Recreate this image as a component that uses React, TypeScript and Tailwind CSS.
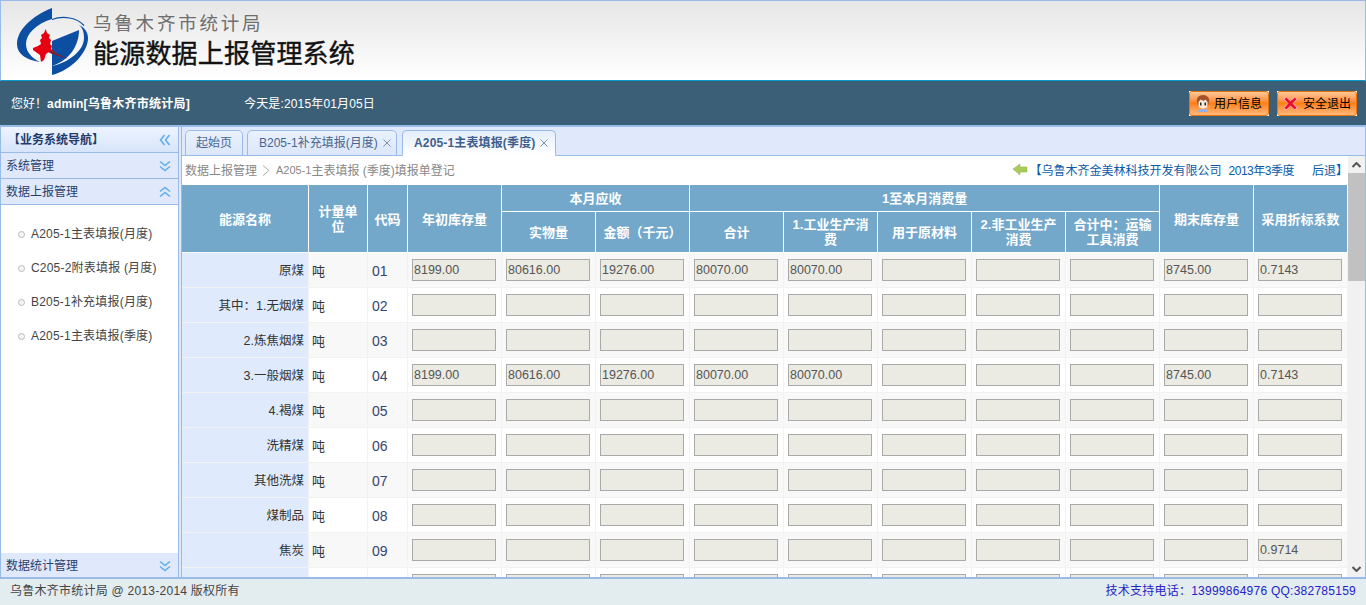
import React from "react";

const font = { fontFamily: '"Liberation Sans","Noto Sans CJK SC",sans-serif' };

function Chevrons({ dir, className = "" }: { dir: "up" | "down" | "left"; className?: string }) {
  const rot = dir === "up" ? "rotate(180 7 7)" : dir === "left" ? "rotate(90 7 7)" : "";
  return (
    <svg width="14" height="14" viewBox="0 0 14 14" className={className}>
      <g transform={rot} fill="none" stroke="#63aeea" strokeWidth="1.6">
        <path d="M2 2.5l5 4 5-4" />
        <path d="M2 7.5l5 4 5-4" />
      </g>
    </svg>
  );
}

function Logo() {
  return (
    <svg width="76" height="72" viewBox="14 6 76 72" className="shrink-0">
      <path d="M52 8v11C36 24 26 34 26 44c0 8 6 14 14 18C26 60 17 54 17 44 17 30 32 16 52 8z" fill="#0b4ea2" />
      <path d="M52 19.5c11-4 25-2 32 6" fill="none" stroke="#0b4ea2" strokeWidth="1.2" />
      <path d="M52 41l27-11c0 15-9 30-27 36z" fill="#0b4ea2" />
      <path d="M52 75c20-5 36-23 36-37 0-6-4-11-9-13 4 3 5 8 5 13 0 12-14 24-32 28z" fill="#0b4ea2" />
      <path d="M48 49l20 10-16-5-4-2z" fill="#7a2030" />
      <path d="M45.700 29l1.300 4 3 2-1 3 2 2-1 4 2 2-1 3 4 3-5-1-4 3-2 6-3 2-1-7-7-5v-2l5-2 3-2-1-4 2-2-1-3 3-2z" fill="#e60012" />
    </svg>
  );
}

function Face() {
  return (
    <svg width="16" height="18" viewBox="0 0 16 18" className="shrink-0">
      <path d="M2 8c-1-4 2-7 6-7s7 3 6 7l-1 4H3z" fill="#a5522c" />
      <path d="M3.500 8l2-2.500 3 1.500 2-1.500 2 2.500v4c0 1.500-2 2.500-4.500 2.500s-4.500-1-4.500-2.500z" fill="#fdebdc" />
      <path d="M3 18c0-2 2-3 5-3s5 1 5 3z" fill="#8fb0ea" />
      <rect x="5" y="8.500" width="1.500" height="3" fill="#222" />
      <rect x="9.500" y="8.500" width="1.500" height="3" fill="#222" />
    </svg>
  );
}

function RedX() {
  return (
    <svg width="15" height="15" viewBox="0 0 14 14" className="shrink-0">
      <path d="M1 3l2-2 4 3.500L11 1l2 2-3.500 4L13 11l-2 2-4-3.500L3 13l-2-2 3.500-4z" fill="#e8102a" stroke="#fde" strokeWidth=".7" />
    </svg>
  );
}

function HeadButton({ icon, label, gap }: { icon: React.ReactNode; label: string; gap: string }) {
  return (
    <div className="bg-white">
      <div className={"flex h-[25px] w-[80px] items-center rounded-[3px] border border-[#e8720c] bg-gradient-to-b from-[#ffc896] via-[#ff8010] to-[#ffb877] pl-[5px] text-[12px] text-black " + gap}>
        {icon}
        <span className="pt-px">{label}</span>
      </div>
    </div>
  );
}

const widths = [127, 59, 40, 94, 94, 94, 94, 94, 94, 94, 94, 94, 94];

const A = ["8199.00", "80616.00", "19276.00", "80070.00", "80070.00", "", "", "", "8745.00", "0.7143"];
const E = ["", "", "", "", "", "", "", "", "", ""];
const J = ["", "", "", "", "", "", "", "", "", "0.9714"];

const rows: { name: string; unit: string; code: string; vals: string[] }[] = [
  { name: "原煤", unit: "吨", code: "01", vals: A },
  { name: "其中：1.无烟煤", unit: "吨", code: "02", vals: E },
  { name: "2.炼焦烟煤", unit: "吨", code: "03", vals: E },
  { name: "3.一般烟煤", unit: "吨", code: "04", vals: A },
  { name: "4.褐煤", unit: "吨", code: "05", vals: E },
  { name: "洗精煤", unit: "吨", code: "06", vals: E },
  { name: "其他洗煤", unit: "吨", code: "07", vals: E },
  { name: "煤制品", unit: "吨", code: "08", vals: E },
  { name: "焦炭", unit: "吨", code: "09", vals: J },
  { name: "", unit: "", code: "", vals: E },
];

const th = "border-r border-b border-white bg-[#73a8cb] p-0 text-center align-middle text-[13px] leading-[15px] font-bold text-white";
const thTall = th + " pt-[2px]";

function EnergyTable() {
  return (
    <table className="table-fixed border-separate border-spacing-0" style={{ width: 1166 }}>
      <colgroup>
        {widths.map((w, i) => (
          <col key={i} style={{ width: w }} />
        ))}
      </colgroup>
      <thead>
        <tr className="h-[27px]">
          <th rowSpan={2} className={thTall}>能源名称</th>
          <th rowSpan={2} className={th + " px-2"}>计量单位</th>
          <th rowSpan={2} className={thTall}>代码</th>
          <th rowSpan={2} className={thTall}>年初库存量</th>
          <th colSpan={2} className={th}>本月应收</th>
          <th colSpan={5} className={th}>1至本月消费量</th>
          <th rowSpan={2} className={thTall}>期末库存量</th>
          <th rowSpan={2} className={thTall}>采用折标系数</th>
        </tr>
        <tr className="h-[41px]">
          <th className={th}>实物量</th>
          <th className={th}>金额（千元）</th>
          <th className={th}>合计</th>
          <th className={th + " px-2"}>1.工业生产消费</th>
          <th className={th}>用于原材料</th>
          <th className={th + " px-2"}>2.非工业生产消费</th>
          <th className={th + " px-1"}>合计中：运输工具消费</th>
        </tr>
      </thead>
      <tbody>
        {rows.map((r, i) => {
          const bg = i % 2 === 0 ? "bg-[#f8f8f8]" : "bg-white";
          const td = "h-[35px] border-r border-b border-[#f2f2f2] p-0 " + bg;
          return (
            <tr key={i}>
              <td className="h-[35px] border-r border-b border-[#f2f2f2] bg-[#dfebfd] p-0 pt-[3px] pr-[4px] text-right text-[12.5px] text-[#333]">{r.name}</td>
              <td className={td + " pt-[3px] pl-[3px] text-[13px] text-[#333]"}>{r.unit}</td>
              <td className={td + " pt-[3px] pl-[4px] text-[14px] text-[#35456e]"}>{r.code}</td>
              {r.vals.map((v, j) => (
                <td key={j} className={td + " pl-[4px] text-left"}>
                  <input
                    readOnly
                    value={v}
                    className="box-border block h-[22px] w-[84px] border border-[#a9a9a9] bg-[#ebeae3] px-[1px] text-[12.5px] text-[#555] outline-none"
                  />
                </td>
              ))}
            </tr>
          );
        })}
      </tbody>
    </table>
  );
}

function Tab({ label, active, close, w }: { label: string; active?: boolean; close?: boolean; w: string }) {
  return (
    <div
      className={
        "mb-[-1px] flex h-[26px] items-center gap-[5px] rounded-t-[5px] border border-[#99bbe8] text-[12px] " +
        (close ? "pl-[11px] " : "justify-center ") +
        w +
        (active
          ? " border-b-white bg-gradient-to-b from-[#e4eefc] to-white font-bold tracking-[0.15px] text-[#415f8c]"
          : " bg-gradient-to-b from-[#e9f1fd] to-[#dbe7fa] text-[#4a6590]")
      }
    >
      <span>{label}</span>
      {close && (
        <svg width="8" height="8" viewBox="0 0 8 8" className="shrink-0">
          <path d="M.5.500l7 7M7.500.500l-7 7" fill="none" stroke="#7a90ac" strokeWidth="1" />
        </svg>
      )}
    </div>
  );
}

function NavItem({ label }: { label: string }) {
  return (
    <div className="flex h-[34px] items-center pl-[17px] text-[12px] tracking-[0.2px] text-[#444]">
      <span className="mr-[6px] h-[7px] w-[7px] rounded-full border border-[#bbb] bg-[#f4f4f4]" />
      {label}
    </div>
  );
}

function NavHead({ label, dir }: { label: string; dir: "up" | "down" }) {
  return (
    <div className="flex h-[26px] items-center justify-between border-b border-[#99bbe8] bg-[#dfe9fb] pr-[6px] pl-[5px] text-[12px] text-[#2a3f6e]">
      <span>{label}</span>
      <Chevrons dir={dir} />
    </div>
  );
}

export default function App() {
  return (
    <div className="flex h-[605px] w-[1366px] flex-col overflow-hidden bg-white" style={font}>
      <header className="flex h-[81px] shrink-0 items-start border-x border-t border-[#99bbe8] border-b border-b-[#0a9ac9] bg-gradient-to-b from-[#e6e6e6] to-white pt-[5px] pl-[13px]">
        <Logo />
        <div className="pl-[3px]">
          <div className="pt-[5px] text-[18.5px] leading-[26px] tracking-[2.8px] text-[#6f6f6f]">乌鲁木齐市统计局</div>
          <div className="text-[26px] leading-[34px] tracking-[0.2px] text-[#111] [-webkit-text-stroke:0.4px_#111]">能源数据上报管理系统</div>
        </div>
      </header>

      <div className="flex h-[44px] shrink-0 items-center justify-between bg-[#3c5f78] pr-[9px] pl-[11px] text-[12px] text-white">
        <div className="flex pt-px">
          <span className="w-[233px]">
            您好！<b className="tracking-[0.25px]">admin[乌鲁木齐市统计局]</b>
          </span>
          <span className="tracking-[0.15px]">今天是:2015年01月05日</span>
        </div>
        <div className="flex gap-[8px]">
          <HeadButton icon={<Face />} label="用户信息" gap="gap-[3px]" />
          <HeadButton icon={<RedX />} label="安全退出" gap="gap-[5px]" />
        </div>
      </div>

      <div className="flex min-h-0 flex-1 gap-[2px] border-x border-y-2 border-[#99bbe8] bg-[#dfe9fb]">
        <aside className="flex w-[178px] shrink-0 flex-col border-r border-[#99bbe8] bg-white">
          <div className="flex h-[26px] items-center justify-between border-b border-[#99bbe8] bg-gradient-to-b from-[#eef4fe] to-[#d6e4fa] pr-[6px] pl-[7px] text-[12px] font-bold text-[#1f3a6a]">
            <span>【业务系统导航】</span>
            <Chevrons dir="left" />
          </div>
          <NavHead label="系统管理" dir="down" />
          <NavHead label="数据上报管理" dir="up" />
          <div className="flex-1 pt-[12px]">
            <NavItem label="A205-1主表填报(月度)" />
            <NavItem label="C205-2附表填报 (月度)" />
            <NavItem label="B205-1补充填报(月度)" />
            <NavItem label="A205-1主表填报(季度)" />
          </div>
          <div className="flex h-[24px] items-center justify-between bg-[#dfe9fb] pt-px pr-[6px] pl-[5px] text-[12px] text-[#2a3f6e]">
            <span>数据统计管理</span>
            <Chevrons dir="down" />
          </div>
        </aside>

        <main className="flex min-w-0 flex-1 flex-col border-l border-[#99bbe8] bg-white">
          <div className="flex h-[29px] shrink-0 items-end gap-[4px] border-b border-[#99bbe8] bg-[#dfe9fb] pl-[3px]">
            <Tab label="起始页" w="w-[58px]" />
            <Tab label="B205-1补充填报(月度)" w="w-[150px]" close />
            <div className="-ml-[3px] w-0" />
            <Tab label="A205-1主表填报(季度)" w="w-[154px]" active close />
          </div>
          <div className="flex min-h-0 flex-1">
            <div className="min-w-0 flex-1 overflow-hidden">
              <div className="flex h-[29px] items-center justify-between pl-[3px] text-[12px]">
                <div className="flex items-center text-[#888]">
                  <span>数据上报管理</span>
                  <svg width="8" height="11" viewBox="0 0 8 11" className="mr-[6px] ml-[5px]">
                    <path d="M1 .500l6 5-6 5" fill="none" stroke="#aaa" strokeWidth="1" />
                  </svg>
                  <span className="text-[11px]">A205-1</span>
                  <span>主表填报 (季度)填报单登记</span>
                </div>
                <div className="flex items-center text-[#0a5aa8]">
                  <svg width="16" height="14" viewBox="0 0 16 14" className="mr-[3px] -translate-y-px">
                    <path d="M1 6l7-5v3h7v5H8v3z" fill="#a8cc5a" stroke="#8ab040" strokeWidth=".5" />
                  </svg>
                  <span className="-ml-[1px]">【乌鲁木齐金美林科技开发有限公司</span>
                  <span className="ml-[7px] tracking-[-0.5px]">2013年3季度</span>
                  <span className="ml-[18px]">后退</span>
                  <span>】</span>
                </div>
              </div>
              <EnergyTable />
            </div>
            <div className="flex w-[17px] shrink-0 flex-col items-center bg-[#f1f1f1]">
              <div className="flex h-[17px] items-center justify-center">
                <svg width="9" height="6" viewBox="0 0 9 6"><path d="M0.500 5L4.500 1l4 4" fill="none" stroke="#555" strokeWidth="2" /></svg>
              </div>
              <div className="h-[108px] w-full bg-[#c1c1c1]" />
              <div className="flex-1" />
              <div className="flex h-[17px] items-center justify-center">
                <svg width="9" height="6" viewBox="0 0 9 6"><path d="M0.500 1L4.500 5l4-4" fill="none" stroke="#555" strokeWidth="2" /></svg>
              </div>
            </div>
          </div>
        </main>
      </div>

      <footer className="flex h-[26px] shrink-0 items-center justify-between bg-[#e3ecef] pr-[10px] pb-[2px] pl-[10px] text-[12px] tracking-[0.25px] text-[#444]">
        <span>乌鲁木齐市统计局 @ 2013-2014 版权所有</span>
        <span className="text-[#2323c8]">技术支持电话：13999864976 QQ:382785159</span>
      </footer>
    </div>
  );
}
